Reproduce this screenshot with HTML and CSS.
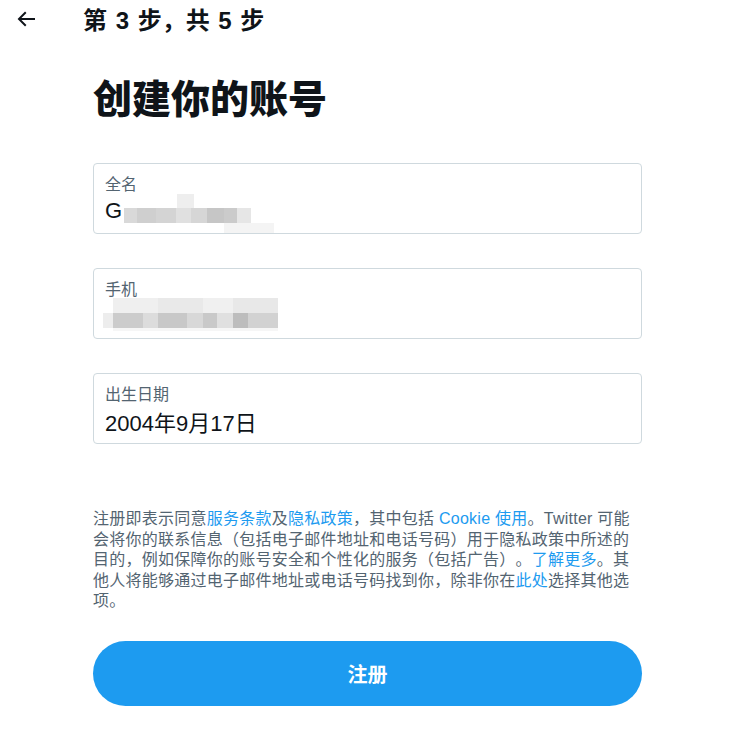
FILE: index.html
```html
<!DOCTYPE html>
<html lang="zh-CN">
<head>
    <meta charset="UTF-8">
    <meta name="viewport" content="width=device-width, initial-scale=1.0">
    <title>创建你的账号</title>
    <link rel="stylesheet" href="styles.css">
</head>
<body>

<header class="topbar">
    <button class="back-btn" type="button" aria-label="返回">
        <svg viewBox="0 0 24 24" width="24" height="24" aria-hidden="true">
            <path d="M7.414 13l5.043 5.04-1.414 1.42L3.586 12l7.457-7.46 1.414 1.42L7.414 11H21v2H7.414z"></path>
        </svg>
    </button>
    <span class="step">第 3 步，共 5 步</span>
</header>

<main class="signup">
    <h1 class="title">创建你的账号</h1>

    <div class="fields">
        <div class="field">
            <div class="field-label">全名</div>
            <div class="field-value">G<span class="blur blur-name"></span></div>
        </div>

        <div class="field">
            <div class="field-label">手机</div>
            <div class="field-value"><span class="blur blur-phone"></span></div>
        </div>

        <div class="field">
            <div class="field-label">出生日期</div>
            <div class="field-value">2004年9月17日</div>
        </div>
    </div>

    <p class="terms">
        注册即表示同意<a href="#">服务条款</a>及<a href="#">隐私政策</a>，其中包括 <a href="#">Cookie 使用</a>。Twitter 可能会将你的联系信息（包括电子邮件地址和电话号码）用于隐私政策中所述的目的，例如保障你的账号安全和个性化的服务（包括广告）。<a href="#">了解更多</a>。其他人将能够通过电子邮件地址或电话号码找到你，除非你在<a href="#">此处</a>选择其他选项。
    </p>

    <button class="submit-btn" type="button">注册</button>
</main>

</body>
</html>
```

FILE: styles.css
```css
/* Sign-up step 3 */
body {
    margin: 0;
    background-color: #ffffff;
    color: #0f1419;
    font-family: "Liberation Sans", "Noto Sans CJK SC", sans-serif;
}

.topbar {
    display: flex;
    align-items: center;
    height: 40px;
    padding-left: 14px;
}
.back-btn {
    display: flex;
    padding: 0;
    border: none;
    background: none;
    cursor: pointer;
}
.back-btn svg {
    fill: #0f1419;
    margin-top: -2px;
}
.step {
    margin-left: 45px;
    margin-top: -3px;
    font-size: 24px;
    font-weight: 700;
    word-spacing: 2px;
}

.signup {
    width: 549px;
    margin-left: 93px;
}
.title {
    margin: 36px 0 0;
    font-size: 39px;
    line-height: 48px;
    font-weight: 900;
}

.fields {
    display: flex;
    flex-direction: column;
    gap: 34px;
    margin-top: 39px;
}
.field {
    height: 71px;
    box-sizing: border-box;
    padding: 11px 11px 0;
    border: 1px solid #cfd9de;
    border-radius: 4px;
}
.field-label {
    font-size: 16px;
    line-height: 20px;
    color: #536471;
}
.field-value {
    display: flex;
    align-items: center;
    height: 28px;
    margin-top: 2px;
    font-size: 22px;
}

/* redacted values */
.blur {
    display: block;
    flex: none;
}
.blur-name {
    width: 150px;
    height: 39px;
    margin-left: 2px;
    margin-top: 4px;
    background:
        linear-gradient(#eeeeee, #eeeeee) 53px 0 / 17px 14px no-repeat,
        linear-gradient(90deg, #d9d9d9 0 13px, #cfcfcf 13px 32px, #d4d4d4 32px 52px, #e0e0e0 52px 67px,
            #d6d6d6 67px 83px, #c6c6c6 83px 100px, #cbcbcb 100px 113px, #e6e6e6 113px 127px) 0 14px / 127px 15px no-repeat,
        linear-gradient(#f4f4f4, #f4f4f4) 100px 29px / 50px 10px no-repeat;
}
.blur-phone {
    width: 175px;
    height: 33px;
    margin-left: -2px;
    margin-bottom: 4px;
    background:
        linear-gradient(90deg, #efefef 0 45px, #e9e9e9 45px 90px, #f0f0f0 90px 120px, #e8e8e8 120px 165px) 10px 0 / 165px 15px no-repeat,
        linear-gradient(90deg, #ededed 0 10px, #cccccc 10px 40px, #dcdcdc 40px 55px, #c8c8c8 55px 84px,
            #d8d8d8 84px 100px, #c9c9c9 100px 114px, #e0e0e0 114px 130px, #bdbdbd 130px 145px, #d2d2d2 145px 175px) 0 15px / 175px 15px no-repeat,
        linear-gradient(#f6f6f6, #f6f6f6) 10px 30px / 165px 3px no-repeat;
}

.terms {
    width: 545px;
    margin: 65px 0 0;
    font-size: 16px;
    line-height: 20.5px;
    letter-spacing: 0.25px;
    text-spacing-trim: space-all;
    color: #536471;
}
.terms a {
    color: #1d9bf0;
    text-decoration: none;
}

.submit-btn {
    display: block;
    width: 100%;
    height: 65px;
    margin-top: 29px;
    border: none;
    border-radius: 9999px;
    background-color: #1d9bf0;
    color: #ffffff;
    font-family: inherit;
    font-size: 20px;
    font-weight: 700;
    cursor: pointer;
}
```
